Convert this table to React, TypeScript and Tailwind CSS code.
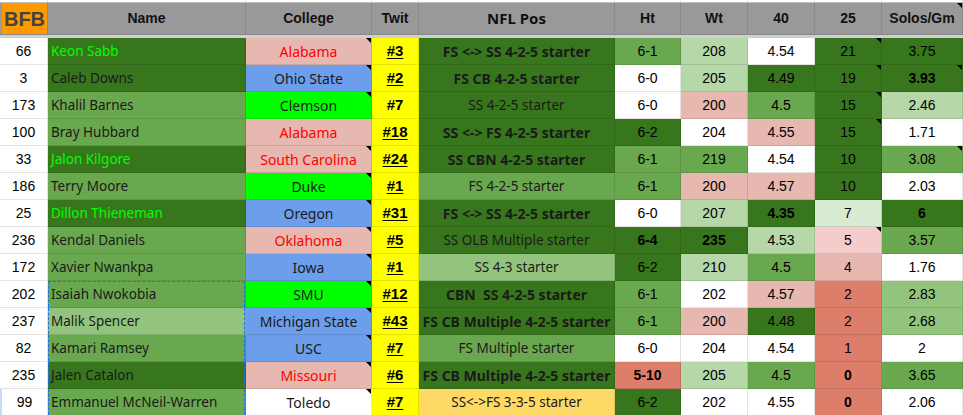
import React from "react";

const DG = "bg-[#38761d]";
const MG = "bg-[#6aa84f]";
const LG = "bg-[#93c47d]";
const VLG = "bg-[#b6d7a8]";
const PK = "bg-[#e6b8af]";
const SAL = "bg-[#dd7e6b]";
const LPK = "bg-[#f4cccc]";
const GRY = "bg-[#d9ead3]";
const W = "bg-white";
const BL = "bg-[#6d9eeb]";
const BG = "bg-[#00ff00]";
const OR = "bg-[#ffd966]";

type V = [string, string, boolean?, boolean?]; // value, bg, bold, note

type Row = {
  bfb: string;
  name: string;
  nameBg: string;
  hi?: boolean;
  college: string;
  cBg: string;
  red?: boolean;
  cNote?: boolean;
  twit: string;
  u: boolean;
  pos: string;
  posBg: string;
  posBold: boolean;
  ht: V;
  wt: V;
  forty: V;
  t25: V;
  solos: V;
};

const rows: Row[] = [
  { bfb: "66", name: "Keon Sabb", nameBg: DG, hi: true, college: "Alabama", cBg: PK, red: true, cNote: true, twit: "#3", u: true, pos: "FS <-> SS 4-2-5 starter", posBg: DG, posBold: true, ht: ["6-1", MG], wt: ["208", VLG], forty: ["4.54", W], t25: ["21", DG, false, true], solos: ["3.75", DG] },
  { bfb: "3", name: "Caleb Downs", nameBg: DG, college: "Ohio State", cBg: BL, cNote: true, twit: "#2", u: true, pos: "FS CB 4-2-5 starter", posBg: DG, posBold: true, ht: ["6-0", W], wt: ["205", VLG], forty: ["4.49", DG], t25: ["19", DG, false, true], solos: ["3.93", DG, true, true] },
  { bfb: "173", name: "Khalil Barnes", nameBg: MG, college: "Clemson", cBg: BG, cNote: true, twit: "#7", u: false, pos: "SS 4-2-5 starter", posBg: DG, posBold: false, ht: ["6-0", W], wt: ["200", PK], forty: ["4.5", MG], t25: ["15", DG, false, true], solos: ["2.46", VLG] },
  { bfb: "100", name: "Bray Hubbard", nameBg: MG, college: "Alabama", cBg: PK, red: true, twit: "#18", u: true, pos: "SS <-> FS 4-2-5 starter", posBg: DG, posBold: true, ht: ["6-2", DG], wt: ["204", W], forty: ["4.55", PK], t25: ["15", DG, false, true], solos: ["1.71", W] },
  { bfb: "33", name: "Jalon Kilgore", nameBg: DG, hi: true, college: "South Carolina", cBg: PK, red: true, cNote: true, twit: "#24", u: true, pos: "SS CBN 4-2-5 starter", posBg: DG, posBold: true, ht: ["6-1", MG], wt: ["219", MG], forty: ["4.54", W], t25: ["10", DG], solos: ["3.08", MG, false, true] },
  { bfb: "186", name: "Terry Moore", nameBg: MG, college: "Duke", cBg: BG, cNote: true, twit: "#1", u: true, pos: "FS 4-2-5 starter", posBg: MG, posBold: false, ht: ["6-1", MG], wt: ["200", PK], forty: ["4.57", PK], t25: ["10", DG], solos: ["2.03", W] },
  { bfb: "25", name: "Dillon Thieneman", nameBg: DG, hi: true, college: "Oregon", cBg: BL, cNote: true, twit: "#31", u: true, pos: "FS <-> SS 4-2-5 starter", posBg: DG, posBold: true, ht: ["6-0", W], wt: ["207", VLG], forty: ["4.35", DG, true], t25: ["7", GRY], solos: ["6", DG, true] },
  { bfb: "236", name: "Kendal Daniels", nameBg: MG, college: "Oklahoma", cBg: PK, red: true, cNote: true, twit: "#5", u: true, pos: "SS OLB Multiple starter", posBg: DG, posBold: false, ht: ["6-4", DG, true], wt: ["235", DG, true], forty: ["4.53", VLG], t25: ["5", LPK, false, true], solos: ["3.57", MG] },
  { bfb: "172", name: "Xavier Nwankpa", nameBg: MG, college: "Iowa", cBg: BL, cNote: true, twit: "#1", u: true, pos: "SS 4-3 starter", posBg: LG, posBold: false, ht: ["6-2", DG], wt: ["210", VLG], forty: ["4.5", MG], t25: ["4", PK], solos: ["1.76", W] },
  { bfb: "202", name: "Isaiah Nwokobia", nameBg: MG, college: "SMU", cBg: BG, cNote: true, twit: "#12", u: true, pos: "CBN  SS 4-2-5 starter", posBg: DG, posBold: true, ht: ["6-1", MG], wt: ["202", W], forty: ["4.57", PK], t25: ["2", SAL], solos: ["2.83", LG] },
  { bfb: "237", name: "Malik Spencer", nameBg: LG, college: "Michigan State", cBg: BL, cNote: true, twit: "#43", u: true, pos: "FS CB Multiple 4-2-5 starter", posBg: DG, posBold: true, ht: ["6-1", MG], wt: ["200", PK], forty: ["4.48", DG], t25: ["2", SAL], solos: ["2.68", LG] },
  { bfb: "82", name: "Kamari Ramsey", nameBg: MG, college: "USC", cBg: BL, cNote: true, twit: "#7", u: true, pos: "FS Multiple starter", posBg: MG, posBold: false, ht: ["6-0", W], wt: ["204", W], forty: ["4.54", W], t25: ["1", SAL], solos: ["2", W] },
  { bfb: "235", name: "Jalen Catalon", nameBg: DG, college: "Missouri", cBg: PK, red: true, cNote: true, twit: "#6", u: true, pos: "FS CB Multiple 4-2-5 starter", posBg: DG, posBold: true, ht: ["5-10", SAL, true], wt: ["205", VLG], forty: ["4.5", MG], t25: ["0", SAL, true], solos: ["3.65", MG] },
  { bfb: "99", name: "Emmanuel McNeil-Warren", nameBg: MG, college: "Toledo", cBg: W, cNote: true, twit: "#7", u: true, pos: "SS<->FS 3-3-5 starter", posBg: OR, posBold: false, ht: ["6-2", DG], wt: ["202", W], forty: ["4.55", W], t25: ["0", SAL, true], solos: ["2.06", W] },
];

const COLS = "grid grid-cols-[48px_198px_126px_47px_196px_66px_67px_67px_67px_81px]";
const ARIAL = "font-['Liberation_Sans',Arial,sans-serif]";
const UB = "font-['Noto_Sans',sans-serif]";

function Note() {
  return (
    <span className="absolute top-0 right-0 w-0 h-0 border-t-[5px] border-t-black border-l-[5px] border-l-transparent" />
  );
}

function Cell({
  bg,
  className = "",
  note,
  children,
}: {
  bg: string;
  className?: string;
  note?: boolean;
  children?: React.ReactNode;
}) {
  return (
    <div
      className={`relative flex items-center overflow-hidden whitespace-nowrap border-r border-b border-[rgba(0,0,0,0.11)] ${bg} ${className}`}
    >
      {children}
      {note && <Note />}
    </div>
  );
}

function NumCell({ v }: { v: V }) {
  return (
    <Cell bg={v[1]} note={v[3]} className={`justify-center ${ARIAL} text-[14px] text-black ${v[2] ? "font-bold" : ""}`}>
      {v[0]}
    </Cell>
  );
}

const headers = ["Name", "College", "Twit", "NFL Pos", "Ht", "Wt", "40", "25", "Solos/Gm"];

export default function App() {
  return (
    <div className="w-[963px] h-[415px] overflow-hidden bg-white">
      {/* top strip */}
      <div className={`${COLS} h-[3px] border-b border-[#c0c0c0]`}>
        {Array.from({ length: 10 }).map((_, i) => (
          <div key={i} className="border-r border-[#e2e2e2]" />
        ))}
      </div>
      {/* header */}
      <div className={`${COLS} h-[32px] bg-[#999999] border-b border-[#8a8a8a]`}>
        <div className={`flex items-center justify-center bg-[#ff9900] ml-[2px] border-r border-[#8a8a8a] ${ARIAL} font-bold text-[20px] text-[#434343]`}>
          BFB
        </div>
        {headers.map((h, i) => (
          <div
            key={h}
            className={`relative flex items-center justify-center border-r border-[#8a8a8a] font-bold text-[#111] ${h === "NFL Pos" ? `${UB} text-[15px]` : `${ARIAL} text-[14px]`}`}
          >
            {h}
            {i === headers.length - 1 && <Note />}
          </div>
        ))}
      </div>
      <div className="h-[3px] bg-[#cfcfcf]" />
      {/* body */}
      {rows.map((r, idx) => (
        <div key={idx} className={`${COLS} h-[27px]`}>
          <Cell
            bg={W}
            className={`justify-center ${ARIAL} text-[14px] text-black ${idx === rows.length - 1 ? "border-l-2 border-l-[#c6dafc]" : ""}`}
          >
            {r.bfb}
          </Cell>
          <Cell
            bg={r.nameBg}
            className={`pl-[3px] ${UB} text-[13.5px] ${r.hi ? "text-[#00ff00]" : "text-[#1a1a1a]"}`}
          >
            {r.name}
            {idx >= 9 && (
              <span
                className={`absolute inset-0 border-l border-r border-dashed border-[#1a73e8] ${idx === 9 ? "border-t" : ""}`}
              />
            )}
          </Cell>
          <Cell
            bg={r.cBg}
            note={r.cNote}
            className={`justify-center ${UB} text-[14px] ${r.red ? "text-[#ff0000]" : "text-[#1a1a1a]"}`}
          >
            {r.college}
          </Cell>
          <Cell bg="bg-[#ffff00]" className={`justify-center ${ARIAL} font-bold text-[15px] text-black`}>
            <span className={r.u ? "underline underline-offset-2" : ""}>{r.twit}</span>
          </Cell>
          <Cell
            bg={r.posBg}
            className={`justify-center ${UB} text-[#1a1a1a] ${r.posBold ? "font-bold text-[14px]" : "text-[13.5px]"}`}
          >
            <span className="whitespace-pre">{r.pos}</span>
          </Cell>
          <NumCell v={r.ht} />
          <NumCell v={r.wt} />
          <NumCell v={r.forty} />
          <NumCell v={r.t25} />
          <NumCell v={r.solos} />
        </div>
      ))}
    </div>
  );
}
